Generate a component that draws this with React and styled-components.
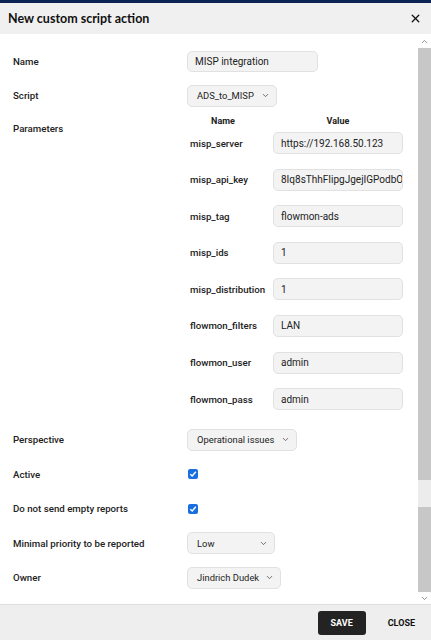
import React from "react";
import styled, { createGlobalStyle } from "styled-components";
import { ChevronDown, ChevronUp, X } from "lucide-react";

const Global = createGlobalStyle`
  html, body {
    margin: 0;
    padding: 0;
    background: #ffffff;
  }
  * {
    box-sizing: border-box;
  }
`;

const Dialog = styled.div`
  width: 431px;
  height: 640px;
  display: flex;
  flex-direction: column;
  font-family: Roboto, "Liberation Sans", sans-serif;
  color: #222;
  border-top: 3px solid #0d2554;
  overflow: hidden;
`;

const Header = styled.div`
  height: 31px;
  flex: none;
  background: #f0f0f0;
  display: flex;
  align-items: center;
  justify-content: space-between;
  padding: 0 9px 0 8px;
`;

const Title = styled.h1`
  margin: 0;
  font-family: Lato, "Liberation Sans", sans-serif;
  font-size: 12.5px;
  font-weight: 700;
  color: #111;
`;

const CloseIcon = styled.button`
  border: none;
  background: none;
  padding: 0;
  display: flex;
  color: #111;
`;

const Body = styled.div`
  flex: 1;
  display: flex;
  min-height: 0;
`;

const Content = styled.div`
  flex: 1;
  padding: 16px 0 0 13px;
  display: flex;
  flex-direction: column;
  gap: 12.5px;
`;

const Scrollbar = styled.div`
  width: 13px;
  flex: none;
  display: flex;
  flex-direction: column;
  background: #ffffff;
`;

const ScrollArrow = styled.div`
  height: ${(p) => p.$h}px;
  display: flex;
  align-items: center;
  justify-content: center;
  color: #8a8a8a;
`;

const ScrollPart = styled.div`
  height: ${(p) => p.$h}px;
  flex: ${(p) => (p.$grow ? 1 : "none")};
  background: ${(p) => (p.$light ? "#ececec" : "#c7c7c7")};
`;

const Row = styled.div`
  display: grid;
  grid-template-columns: 174px auto;
  align-items: ${(p) => (p.$top ? "start" : "center")};
  min-height: 22px;
  margin: ${(p) => p.$margin || "0"};
`;

const Label = styled.div`
  font-size: 9.7px;
  font-weight: 500;
  color: #222;
  padding-top: ${(p) => p.$pt || 0}px;
`;

const TextInput = styled.div`
  width: ${(p) => p.$w}px;
  height: ${(p) => p.$h || 21}px;
  background: #f3f3f3;
  border: 1px solid #e1e1e1;
  border-radius: 5px;
  font-size: 10px;
  color: #222;
  display: flex;
  align-items: center;
  padding-left: 7px;
  white-space: nowrap;
  overflow: hidden;
`;

const Select = styled.div`
  width: ${(p) => p.$w}px;
  height: 22px;
  background: #f3f3f3;
  border: 1px solid #e1e1e1;
  border-radius: 5px;
  font-size: 9.4px;
  color: #222;
  display: flex;
  align-items: center;
  justify-content: space-between;
  padding: 0 6px 0 9px;
`;

const Params = styled.div`
  display: flex;
  flex-direction: column;
`;

const ParamHead = styled.div`
  display: grid;
  grid-template-columns: 72px 14px 130px;
  height: 14px;
  align-items: center;
  margin-bottom: 4px;
  font-size: 9px;
  font-weight: 700;
  text-align: center;
  color: #222;
`;

const ParamList = styled.div`
  display: grid;
  grid-template-columns: 86px 130px;
  row-gap: 14.6px;
  align-items: center;
`;

const ParamName = styled.div`
  font-size: 9.7px;
  font-weight: 500;
  padding-left: 3px;
  white-space: nowrap;
`;

const Check = styled.span`
  width: 10px;
  height: 10px;
  margin-left: 1px;
  border-radius: 2px;
  background: #1a6fe0;
  display: flex;
  align-items: center;
  justify-content: center;
`;

const Footer = styled.div`
  height: 36px;
  flex: none;
  background: #eeeeee;
  border-top: 1px solid #dddddd;
  display: flex;
  align-items: center;
  justify-content: flex-end;
  padding-right: 16px;
  gap: 22px;
`;

const Button = styled.button`
  border: none;
  border-radius: 3px;
  height: 24px;
  padding: 0 ${(p) => (p.$dark ? 13 : 0)}px;
  background: ${(p) => (p.$dark ? "#232323" : "transparent")};
  color: ${(p) => (p.$dark ? "#fff" : "#111")};
  font-family: Roboto, "Liberation Sans", sans-serif;
  font-size: 9px;
  font-weight: 700;
  cursor: pointer;
`;

const params = [
  ["misp_server", "https://192.168.50.123"],
  ["misp_api_key", "8Iq8sThhFIipgJgejIGPodbO"],
  ["misp_tag", "flowmon-ads"],
  ["misp_ids", "1"],
  ["misp_distribution", "1"],
  ["flowmon_filters", "LAN"],
  ["flowmon_user", "admin"],
  ["flowmon_pass", "admin"],
];

const Caret = () => <ChevronDown size={9} strokeWidth={2} color="#444" />;

const CheckBox = () => (
  <Check>
    <svg width="8" height="8" viewBox="0 0 8 8">
      <path d="M1.3 4.2 L3.2 6 L6.8 1.8" fill="none" stroke="#fff" strokeWidth="1.4" />
    </svg>
  </Check>
);

const App = () => {
  return (
    <Dialog>
      <Global />
      <Header>
        <Title>New custom script action</Title>
        <CloseIcon>
          <X size={13} strokeWidth={2.4} />
        </CloseIcon>
      </Header>
      <Body>
        <Content>
          <Row>
            <Label>Name</Label>
            <TextInput $w={131}>MISP integration</TextInput>
          </Row>
          <Row>
            <Label>Script</Label>
            <Select $w={90}>
              ADS_to_MISP <Caret />
            </Select>
          </Row>
          <Row $top $margin="-5px 0 6px">
            <Label $pt={9}>Parameters</Label>
            <Params>
              <ParamHead>
                <span>Name</span>
                <span />
                <span>Value</span>
              </ParamHead>
              <ParamList>
                {params.map(([name, value]) => (
                  <React.Fragment key={name}>
                    <ParamName>{name}</ParamName>
                    <TextInput $w={130} $h={22}>
                      {value}
                    </TextInput>
                  </React.Fragment>
                ))}
              </ParamList>
            </Params>
          </Row>
          <Row>
            <Label>Perspective</Label>
            <Select $w={110}>
              Operational issues <Caret />
            </Select>
          </Row>
          <Row>
            <Label>Active</Label>
            <CheckBox />
          </Row>
          <Row>
            <Label>Do not send empty reports</Label>
            <CheckBox />
          </Row>
          <Row>
            <Label>Minimal priority to be reported</Label>
            <Select $w={88}>
              Low <Caret />
            </Select>
          </Row>
          <Row>
            <Label>Owner</Label>
            <Select $w={94}>
              Jindrich Dudek <Caret />
            </Select>
          </Row>
        </Content>
        <Scrollbar>
          <ScrollArrow $h={14}>
            <ChevronUp size={9} strokeWidth={2.5} />
          </ScrollArrow>
          <ScrollPart $grow />
          <ScrollPart $h={27} $light />
          <ScrollPart $h={85} />
          <ScrollArrow $h={12}>
            <ChevronDown size={9} strokeWidth={2.5} />
          </ScrollArrow>
        </Scrollbar>
      </Body>
      <Footer>
        <Button $dark>SAVE</Button>
        <Button>CLOSE</Button>
      </Footer>
    </Dialog>
  );
};

export default App;
